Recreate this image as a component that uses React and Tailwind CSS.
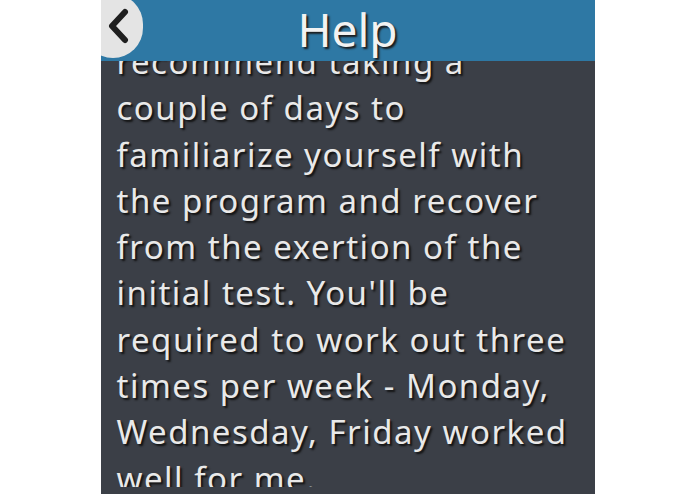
import React from 'react';

const HelpScreen = () => {
  return (
    <div className="w-[695px] h-[494px] bg-white flex justify-center overflow-hidden">
      <div className="w-[494px] h-full flex flex-col bg-[#3b3f47] relative overflow-hidden" style={{ fontFamily: '"Noto Sans", "Open Sans", sans-serif' }}>
        {/* Header */}
        <div className="h-[61px] shrink-0 bg-[#2e78a4] flex items-center justify-center relative z-10">
          <button className="absolute -left-[18px] -top-[6px] w-[60px] h-[64px] rounded-full bg-[#e4e4e4] flex items-center justify-start pl-[23px]">
            <svg width="24" height="36" viewBox="0 0 24 36" fill="none">
              <path d="M19 4 L6 18 L19 32" stroke="#1f1f1f" strokeWidth="6" strokeLinecap="round" strokeLinejoin="round" />
            </svg>
          </button>
          <h1 className="text-[46px] leading-none text-[#f2f2f2] [text-shadow:2px_2px_2px_#1b1b1b] -mt-[4px]">Help</h1>
        </div>

        {/* Scrolled content */}
        <div className="flex-1 flex flex-col pb-[7px] min-h-0">
          <div className="flex-1 overflow-hidden">
            <p className="-mt-[22px] pl-4 pr-2 text-[33px] tracking-[1.5px] leading-[46.3px] text-[#e9e9e9] [text-shadow:2px_2px_2px_#111]">
              recommend taking a couple of days to familiarize yourself with the program and recover from the exertion of the initial test. You'll be required to work out three times per week - Monday, Wednesday, Friday worked well for me.
            </p>
          </div>
        </div>
      </div>
    </div>
  );
};

export default function App() {
  return <HelpScreen />;
}
